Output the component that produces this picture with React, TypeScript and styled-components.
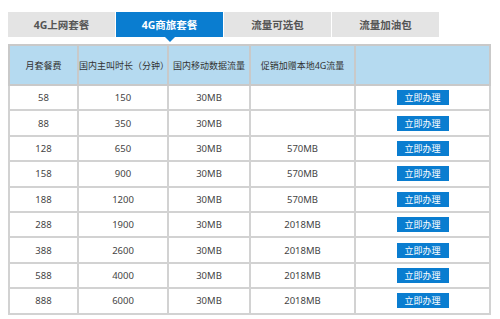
import React from "react";
import styled, { createGlobalStyle } from "styled-components";

const Global = createGlobalStyle`
  html, body { margin: 0; padding: 0; background: #fff; }
  body { font-family: "Noto Sans", "Noto Sans CJK SC", sans-serif; }
`;

const Page = styled.div`
  padding: 12px 0 0 8px;
  width: 481px;
`;

const Tabs = styled.div`
  display: flex;
  gap: 1px;
  height: 25px;
`;

const Tab = styled.div<{ $active?: boolean }>`
  position: relative;
  width: 107px;
  display: flex;
  align-items: center;
  justify-content: center;
  font-size: 10.5px;
  font-weight: 700;
  color: ${(p) => (p.$active ? "#fff" : "#555")};
  background: ${(p) => (p.$active ? "#0a7dd0" : "#e4e4e4")};
  &::after {
    content: "";
    display: ${(p) => (p.$active ? "block" : "none")};
    position: absolute;
    left: 50%;
    bottom: -5px;
    margin-left: -5px;
    border-left: 5px solid transparent;
    border-right: 5px solid transparent;
    border-top: 5px solid #0a7dd0;
  }
`;

const Table = styled.table`
  margin-top: 7px;
  width: 481px;
  border-collapse: collapse;
  table-layout: fixed;
  border: 2px solid #4a4a4a;
`;

const Th = styled.th`
  height: 38px;
  background: #b5daf0;
  border: 2px solid #c9c9c9;
  font-size: 9px;
  font-weight: 400;
  color: #333;
  padding: 0;
  text-align: center;
  white-space: nowrap;
`;

const Td = styled.td`
  height: 23.4px;
  border: 2px solid #d2d2d2;
  font-size: 9.5px;
  color: #444;
  padding: 0;
  text-align: center;
`;

const Btn = styled.button`
  width: 52px;
  height: 15px;
  border: 0;
  padding: 0;
  background: #0a7dd0;
  color: #fff;
  font-size: 9px;
  font-family: "Noto Sans CJK SC", sans-serif;
  display: inline-flex;
  align-items: center;
  justify-content: center;
  line-height: 1;
  vertical-align: middle;
`;

const rows: [string, string, string, string][] = [
  ["58", "150", "30MB", ""],
  ["88", "350", "30MB", ""],
  ["128", "650", "30MB", "570MB"],
  ["158", "900", "30MB", "570MB"],
  ["188", "1200", "30MB", "570MB"],
  ["288", "1900", "30MB", "2018MB"],
  ["388", "2600", "30MB", "2018MB"],
  ["588", "4000", "30MB", "2018MB"],
  ["888", "6000", "30MB", "2018MB"],
];

export default function App() {
  return (
    <>
      <Global />
      <Page>
        <Tabs>
          <Tab>4G上网套餐</Tab>
          <Tab $active>4G商旅套餐</Tab>
          <Tab>流量可选包</Tab>
          <Tab>流量加油包</Tab>
        </Tabs>
        <Table>
          <colgroup>
            <col style={{ width: 69 }} />
            <col style={{ width: 90 }} />
            <col style={{ width: 82 }} />
            <col style={{ width: 105 }} />
            <col style={{ width: 135 }} />
          </colgroup>
          <thead>
            <tr>
              <Th>月套餐费</Th>
              <Th>国内主叫时长（分钟）</Th>
              <Th>国内移动数据流量</Th>
              <Th>促销加赠本地4G流量</Th>
              <Th></Th>
            </tr>
          </thead>
          <tbody>
            {rows.map((r) => (
              <tr key={r[0]}>
                <Td>{r[0]}</Td>
                <Td>{r[1]}</Td>
                <Td>{r[2]}</Td>
                <Td>{r[3]}</Td>
                <Td>
                  <Btn>立即办理</Btn>
                </Td>
              </tr>
            ))}
          </tbody>
        </Table>
      </Page>
    </>
  );
}
